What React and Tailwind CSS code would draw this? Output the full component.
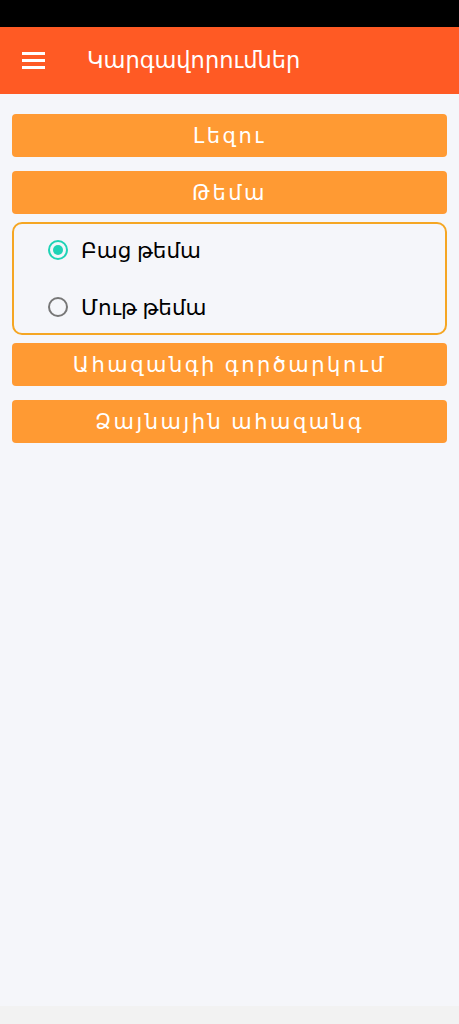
export default function App() {
  const items = ["Լեզու", "Թեմա"];
  const themes = [
    { label: "Բաց թեմա", on: true },
    { label: "Մութ թեմա", on: false },
  ];

  return (
    <div
      className="w-[459px] h-[1024px] flex flex-col bg-[#f5f6fa]"
      style={{ fontFamily: '"Noto Sans", "DejaVu Sans", sans-serif' }}
    >
      <div className="h-[27px] bg-black" />
      <header className="h-[67px] bg-[#ff5a24] flex items-center">
        <div className="w-[87px] pl-[22px]">
          <div className="w-[23px] flex flex-col gap-[4px]">
            <div className="h-[3px] bg-white" />
            <div className="h-[3px] bg-white" />
            <div className="h-[3px] bg-white" />
          </div>
        </div>
        <h1 className="text-white text-[22.5px] leading-none">Կարգավորումներ</h1>
      </header>

      <main className="flex-1 flex flex-col px-[12px] pt-[20px]">
        {items.map((t) => (
          <button
            key={t}
            className="h-[43px] mb-[14px] rounded-[4px] bg-[#ff9a33] text-white text-[21px] tracking-[2.5px] flex items-center justify-center"
          >
            {t}
          </button>
        ))}

        <div className="-mt-[6px] h-[113px] rounded-[10px] border-2 border-[#f5a623] flex flex-col justify-center gap-[13px] pl-[34px]">
          {themes.map((r) => (
            <label key={r.label} className="flex items-center gap-[13px] h-[44px]">
              <span
                className={`w-[20px] h-[20px] rounded-full border-2 flex items-center justify-center ${
                  r.on ? "border-[#1fd3b6]" : "border-[#777777]"
                }`}
              >
                {r.on && <span className="w-[10px] h-[10px] rounded-full bg-[#1fd3b6]" />}
              </span>
              <span className="text-[21.5px] text-black">{r.label}</span>
            </label>
          ))}
        </div>

        <button className="mt-[8px] h-[43px] rounded-[4px] bg-[#ff9a33] text-white text-[21px] tracking-[2.5px] flex items-center justify-center">
          Ահազանգի գործարկում
        </button>
        <button className="mt-[14px] h-[43px] rounded-[4px] bg-[#ff9a33] text-white text-[21px] tracking-[2.5px] flex items-center justify-center">
          Ձայնային ահազանգ
        </button>
      </main>

      <div className="h-[18px] bg-[#f2f2f2]" />
    </div>
  );
}
